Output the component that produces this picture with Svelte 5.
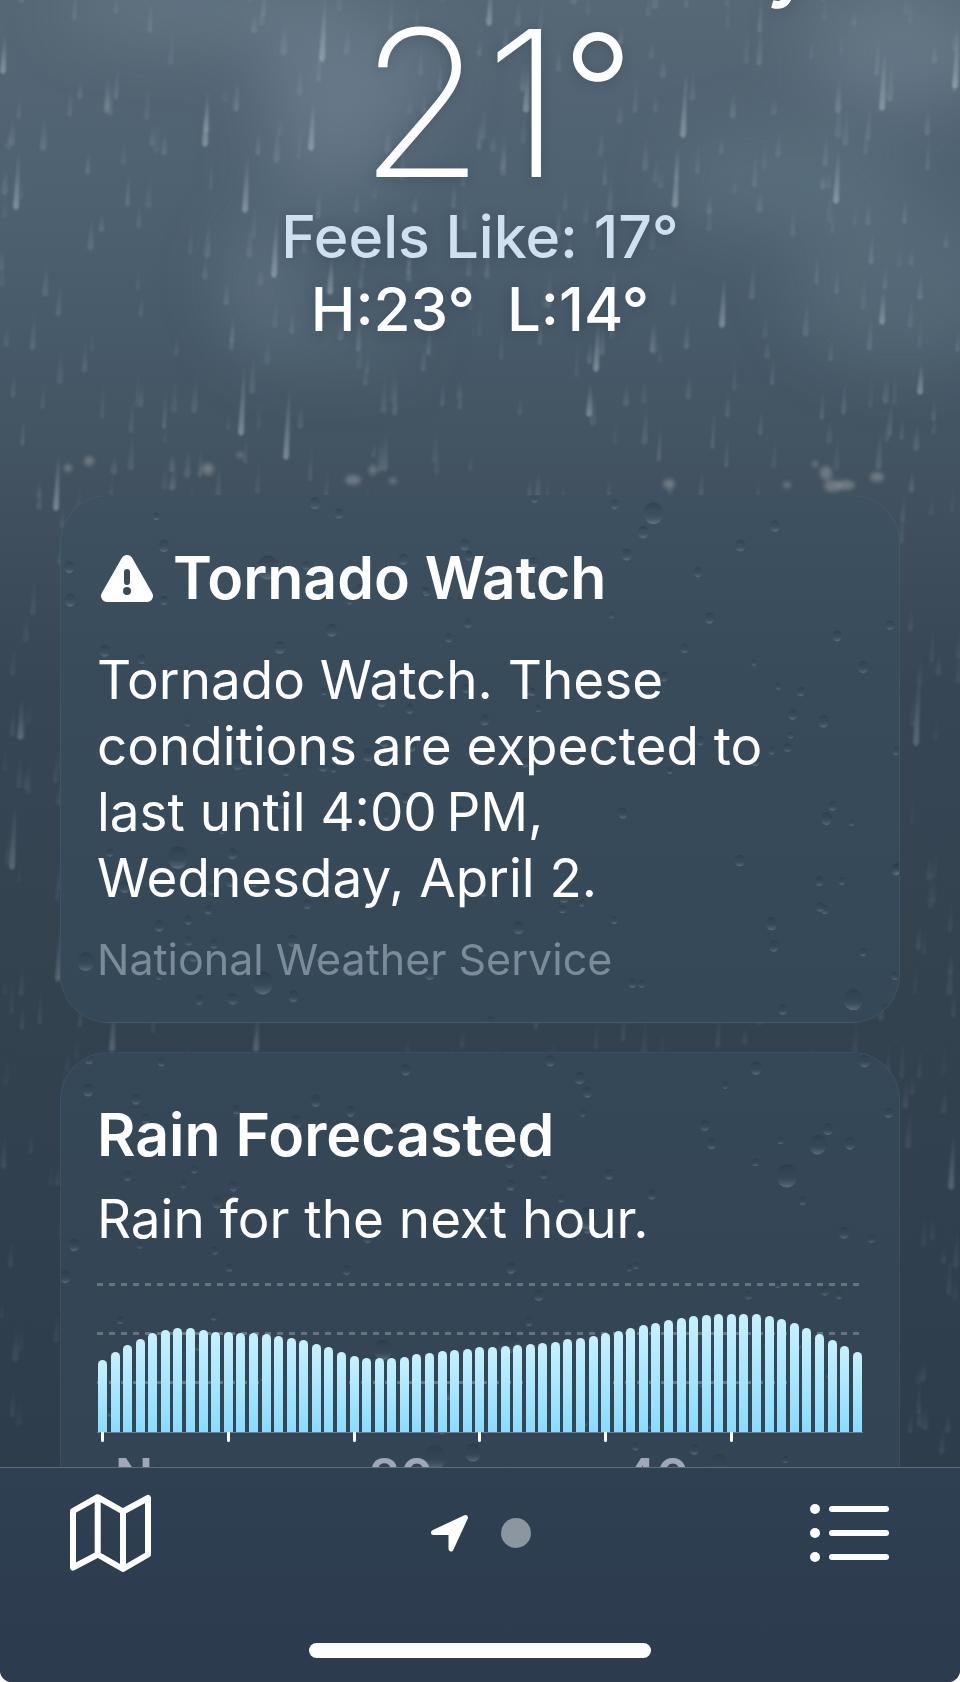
<script lang="ts">
    type Streak = { x: number; y: number; length: number; width: number; opacity: number };
    type Drop = { x: number; y: number; r: number };

    const alert = {
        title: 'Tornado Watch',
        text: 'Tornado Watch. These conditions are expected to last until 4:00\u2009PM, Wednesday, April 2.',
        source: 'National Weather Service'
    };

    // precipitation for each minute of the next hour, in chart pixels
    const rain = [
        72, 80, 87, 93, 99, 102, 104, 104, 102, 100, 100, 99, 99, 98, 96, 94, 92, 88, 85, 80,
        76, 74, 74, 74, 75, 78, 79, 81, 82, 83, 85, 85, 86, 87, 88, 89, 90, 93, 94, 96,
        99, 101, 104, 107, 109, 112, 114, 116, 117, 118, 118, 118, 118, 116, 113, 109, 104, 98, 92, 86,
        80
    ];
    const hourLabels = ['Now', '20', '40'];

    function random(seed: number) {
        return () => {
            seed = (seed * 1664525 + 1013904223) % 4294967296;
            return seed / 4294967296;
        };
    }

    const nearStreaks = [
        [322, 62, 66], [205, 147, 58], [311, 151, 52], [245, 213, 60], [16, 210, 60], [274, 278, 66],
        [241, 436, 72], [286, 460, 74], [56, 511, 62], [489, 26, 40], [526, 113, 54], [683, 138, 66],
        [675, 208, 64], [882, 111, 62], [955, 89, 66], [836, 204, 58], [722, 328, 52], [596, 372, 54],
        [589, 417, 34], [882, 325, 36], [916, 746, 84], [58, 982, 60], [112, 1052, 50], [256, 1052, 40],
        [12, 870, 70], [951, 1190, 60], [20, 740, 44], [3, 74, 40], [330, 295, 40], [920, 395, 34]
    ].map(([x, y, length]) => ({ x, y, length, width: 6, opacity: 0.42 * (y > 600 ? 0.6 : 1) }));

    function makeStreaks(count: number): Streak[] {
        const next = random(21);
        const list: Streak[] = [];
        for (let i = 0; i < count; i++) {
            const y = next() * 1460;
            list.push({
                x: next() * 960,
                y,
                length: 18 + next() * 24,
                width: 4 + next() * 3,
                opacity: (0.07 + next() * 0.12) * (y > 600 ? 0.6 : 1)
            });
        }
        return list;
    }

    function makeDrops(seed: number, count: number): Drop[] {
        const next = random(seed);
        const list: Drop[] = [];
        for (let i = 0; i < count; i++) {
            const big = next() > 0.93;
            list.push({ x: next() * 840, y: next() * 528, r: big ? 8 + next() * 3 : 3 + next() * 3 });
        }
        return list;
    }

    const streaks = [...makeStreaks(900), ...nearStreaks];
    const cardDrops = [makeDrops(7, 130), makeDrops(17, 120)];

    const splashes = [
        [68, 468, 4, 4], [89, 461, 5, 5], [208, 469, 6, 6], [240, 455, 3, 3], [353, 480, 8, 5],
        [373, 470, 4, 5], [393, 481, 4, 3], [669, 484, 6, 5], [815, 464, 3, 3], [826, 473, 6, 7],
        [833, 486, 9, 6], [846, 485, 9, 5], [877, 477, 7, 5], [787, 485, 4, 3]
    ];

    function streakPath(s: Streak) {
        const half = s.width / 2;
        const top = s.x + s.length * 0.05;
        return `M${top - 1} ${s.y - s.length} H${top + 1} L${s.x + half} ${s.y - half} Q${s.x} ${s.y + half} ${s.x - half} ${s.y - half} Z`;
    }
</script>

{#snippet drops(list: Drop[], id: string)}
    <svg class="drops" viewBox="0 0 840 528" preserveAspectRatio="xMidYMin slice" aria-hidden="true">
        <defs>
            <linearGradient id={id} x1="0" y1="0" x2="0" y2="1">
                <stop offset="0" stop-color="#1c2c3a" stop-opacity="0.4" />
                <stop offset="0.55" stop-color="#33475a" stop-opacity="0.1" />
                <stop offset="1" stop-color="#a9bccb" stop-opacity="0.34" />
            </linearGradient>
        </defs>
        {#each list as drop}
            <ellipse cx={drop.x} cy={drop.y} rx={drop.r} ry={drop.r * 1.1} fill="url(#{id})" />
        {/each}
    </svg>
{/snippet}

<div class="screen">
    <svg class="sky" viewBox="0 0 960 1682" preserveAspectRatio="xMidYMin slice" aria-hidden="true">
        <defs>
            <filter id="cloud" filterUnits="userSpaceOnUse" x="-200" y="-200" width="1360" height="900">
                <feGaussianBlur stdDeviation="32" />
            </filter>
            <filter id="soft">
                <feGaussianBlur stdDeviation="1" />
            </filter>
            <filter id="mist" x="-10%" y="-50%" width="120%" height="200%">
                <feGaussianBlur stdDeviation="2" />
            </filter>
            <linearGradient id="streak" x1="0" y1="0" x2="0" y2="1">
                <stop offset="0" stop-color="#c3d0dc" stop-opacity="0" />
                <stop offset="1" stop-color="#c3d0dc" />
            </linearGradient>
        </defs>
        <g filter="url(#cloud)" fill="#8194a4">
            <ellipse cx="210" cy="10" rx="150" ry="34" opacity="0.3" />
            <ellipse cx="350" cy="80" rx="90" ry="60" opacity="0.4" />
            <ellipse cx="330" cy="160" rx="70" ry="50" opacity="0.28" />
            <ellipse cx="262" cy="280" rx="36" ry="60" opacity="0.34" />
            <ellipse cx="330" cy="345" rx="90" ry="24" opacity="0.2" />
            <ellipse cx="900" cy="50" rx="90" ry="60" opacity="0.36" />
            <ellipse cx="790" cy="180" rx="120" ry="50" opacity="0.2" />
            <ellipse cx="900" cy="290" rx="110" ry="80" opacity="0.2" />
        </g>
        <g filter="url(#soft)">
            {#each streaks as streak}
                <path d={streakPath(streak)} fill="url(#streak)" opacity={streak.opacity} />
            {/each}
        </g>
        <g filter="url(#mist)">
            {#each splashes as [x, y, rx, ry]}
                <ellipse cx={x} cy={y} {rx} {ry} fill="#a9aeb2" opacity="0.42" />
            {/each}
        </g>
    </svg>

    <main>
        <header>
            <div class="city">y</div>
            <div class="temperature">21<span class="degree">°</span></div>
            <div class="feels">Feels Like: 17°</div>
            <div class="range"><span>H:23°</span><span>L:14°</span></div>
        </header>

        <section class="card alert">
            {@render drops(cardDrops[0], 'drop-alert')}
            <h2>
                <svg class="warning" viewBox="0 0 52 47" aria-hidden="true">
                    <path d="M26 6 L46 41 H6 Z" fill="#fff" stroke="#fff" stroke-width="12" stroke-linejoin="round" />
                    <path d="M26 17 V27" stroke="#384b5b" stroke-width="6" stroke-linecap="round" />
                    <circle cx="26" cy="36" r="4" fill="#384b5b" />
                </svg>
                {alert.title}
            </h2>
            <p>{alert.text}</p>
            <small>{alert.source}</small>
        </section>

        <section class="card forecast">
            {@render drops(cardDrops[1], 'drop-forecast')}
            <h2>Rain Forecasted</h2>
            <p>Rain for the next hour.</p>
            <div class="chart">
                <div class="grid-lines">
                    <i></i><i></i><i></i>
                </div>
                {#each rain as value, minute}
                    <div class="bar" class:tick={minute % 10 === 0 && minute < 60} style="height: {value}px"></div>
                {/each}
            </div>
            <div class="labels">
                {#each hourLabels as label}
                    <span>{label}</span>
                {/each}
            </div>
        </section>
    </main>

    <nav>
        <div class="tabs">
            <button aria-label="Map">
                <svg width="81" height="78" viewBox="0 0 81 78" fill="none" stroke="#fff" stroke-width="6" stroke-linejoin="round">
                    <path d="M3 17 L27.7 3.2 L53 17.5 L78 4 V60.5 L53 75 L27.7 60.5 L3 73.5 Z" />
                    <path d="M27.7 3 V61 M53 17 V75" />
                </svg>
            </button>
            <div class="pages">
                <svg width="38" height="38" viewBox="0 0 38 38" aria-hidden="true">
                    <path d="M2.5 18.5 L34.5 3.5 L20 35 V18.5 Z" fill="#fff" stroke="#fff" stroke-width="5" stroke-linejoin="round" />
                </svg>
                <span class="page"></span>
            </div>
            <button aria-label="Locations">
                <svg width="80" height="60" viewBox="0 0 80 60" fill="#fff">
                    {#each [6, 30, 54] as y}
                        <circle cx="5" cy={y} r="5" />
                        <rect x="19" y={y - 3} width="60" height="6" rx="3" />
                    {/each}
                </svg>
            </button>
        </div>
        <div class="home-indicator"></div>
    </nav>
</div>

<style>
    :global(body) {
        margin: 0;
        background: #fff;
    }

    .screen {
        position: relative;
        display: flex;
        flex-direction: column;
        height: 100vh;
        overflow: hidden;
        border-radius: 0 0 12px 12px;
        color: #fff;
        font-family: Inter, "Liberation Sans", sans-serif;
        background: linear-gradient(#566876 0, #4e6171 12%, #475a69 20%, #41515f 29%, #374654 41%, #33424f 60%, #2e3d4c 87%);
    }

    .sky,
    .drops {
        position: absolute;
        inset: 0;
        width: 100%;
        height: 100%;
    }

    main {
        position: relative;
        flex: 1;
        min-height: 0;
        overflow: hidden;
    }

    header {
        display: flex;
        flex-direction: column;
        align-items: center;
        margin-bottom: 149px;
        text-shadow: 0 2px 12px rgba(30, 45, 60, 0.25);
    }

    .city {
        align-self: flex-end;
        margin-top: -83px;
        padding-right: 146px;
        font-size: 84px;
        line-height: 88px;
        font-weight: 500;
    }

    .temperature {
        display: flex;
        align-items: flex-start;
        padding-left: 32px;
        font-size: 204px;
        line-height: 196px;
        font-weight: 200;
    }

    .degree {
        font-size: 156px;
        line-height: 172px;
        font-weight: 300;
    }

    .feels {
        font-size: 59px;
        line-height: 72px;
        font-weight: 500;
        color: #cfe1f0;
    }

    .range {
        display: flex;
        gap: 32px;
        font-size: 60px;
        line-height: 73px;
        font-weight: 500;
    }

    .card {
        position: relative;
        overflow: hidden;
        margin: 0 60px 29px;
        padding: 46px 36px 36px;
        border: 1px solid rgba(130, 155, 170, 0.12);
        border-radius: 48px;
    }

    .alert {
        background: linear-gradient(#3d5161, #384b5a 35%, #354858);
    }

    .forecast {
        background: linear-gradient(#354858, #334454);
    }

    h2,
    p,
    small {
        position: relative;
        display: block;
        margin: 0;
    }

    h2 {
        display: flex;
        align-items: center;
        font-size: 59px;
        line-height: 72px;
        font-weight: 600;
    }

    .warning {
        width: 52px;
        height: 47px;
        margin: 0 20px 0 4px;
    }

    p {
        font-size: 53px;
        line-height: 66px;
    }

    small {
        font-size: 43px;
        line-height: 54px;
        color: #7a8c9a;
    }

    .alert p {
        margin: 33px 0 21px;
    }

    .forecast p {
        margin: 15px 0 31px;
    }

    .chart {
        position: relative;
        display: flex;
        align-items: flex-end;
        justify-content: space-between;
        height: 149px;
        padding: 0 1px;
        border-bottom: 1px solid #6f7d89;
    }

    .grid-lines {
        position: absolute;
        inset: 0 0 48px;
        display: flex;
        flex-direction: column;
        justify-content: space-between;
    }

    .grid-lines i {
        height: 3px;
        background: repeating-linear-gradient(90deg, #66747f 0 6px, transparent 6px 12px);
    }

    .bar {
        position: relative;
        width: 9px;
        border-radius: 5px 5px 0 0;
        background: linear-gradient(#c7f1fe, #8adbff);
    }

    .tick::after {
        content: "";
        position: absolute;
        top: 100%;
        left: 3px;
        width: 3px;
        height: 10px;
        border-radius: 0 0 2px 2px;
        background: #fff;
    }

    .labels {
        position: relative;
        display: grid;
        grid-template-columns: repeat(3, 1fr);
        margin: 13px -14px 0 0;
        padding-left: 18px;
        font-size: 50px;
        line-height: 60px;
        font-weight: 600;
        color: #a0a8b8;
    }

    nav {
        position: relative;
        border-top: 1px solid #5e6d7a;
        padding-bottom: 24px;
        background: linear-gradient(#2e4052, #2c3b4d);
    }

    .tabs {
        display: flex;
        align-items: center;
        justify-content: space-between;
        height: 130px;
        padding: 0 70px;
    }

    button {
        display: flex;
        padding: 0;
        border: 0;
        background: none;
        cursor: pointer;
    }

    .pages {
        display: flex;
        align-items: center;
        gap: 32px;
    }

    .page {
        width: 30px;
        height: 30px;
        border-radius: 50%;
        background: #8c96a0;
    }

    .home-indicator {
        width: 342px;
        height: 15px;
        margin: 45px auto 0;
        border-radius: 8px;
        background: #fff;
    }
</style>
